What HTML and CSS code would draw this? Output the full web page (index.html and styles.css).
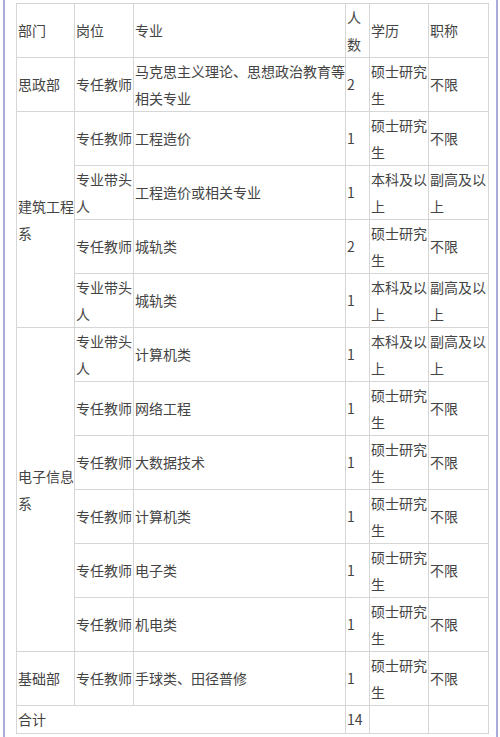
FILE: index.html
```html
<!DOCTYPE html>
<html lang="zh">
<head>
<meta charset="utf-8">
<link rel="stylesheet" href="styles.css">
</head>
<body>
<div class="frame">
<table class="jobs">
<colgroup>
<col class="c-dept"><col class="c-post"><col class="c-major"><col class="c-num"><col class="c-edu"><col class="c-title">
</colgroup>
<tbody>
<tr><td>部门</td><td>岗位</td><td>专业</td><td>人数</td><td>学历</td><td>职称</td></tr>
<tr><td>思政部</td><td>专任教师</td><td>马克思主义理论、思想政治教育等相关专业</td><td>2</td><td>硕士研究生</td><td>不限</td></tr>
<tr><td rowspan="4">建筑工程系</td><td>专任教师</td><td>工程造价</td><td>1</td><td>硕士研究生</td><td>不限</td></tr>
<tr><td>专业带头人</td><td>工程造价或相关专业</td><td>1</td><td>本科及以上</td><td>副高及以上</td></tr>
<tr><td>专任教师</td><td>城轨类</td><td>2</td><td>硕士研究生</td><td>不限</td></tr>
<tr><td>专业带头人</td><td>城轨类</td><td>1</td><td>本科及以上</td><td>副高及以上</td></tr>
<tr><td rowspan="6">电子信息系</td><td>专业带头人</td><td>计算机类</td><td>1</td><td>本科及以上</td><td>副高及以上</td></tr>
<tr><td>专任教师</td><td>网络工程</td><td>1</td><td>硕士研究生</td><td>不限</td></tr>
<tr><td>专任教师</td><td>大数据技术</td><td>1</td><td>硕士研究生</td><td>不限</td></tr>
<tr><td>专任教师</td><td>计算机类</td><td>1</td><td>硕士研究生</td><td>不限</td></tr>
<tr><td>专任教师</td><td>电子类</td><td>1</td><td>硕士研究生</td><td>不限</td></tr>
<tr><td>专任教师</td><td>机电类</td><td>1</td><td>硕士研究生</td><td>不限</td></tr>
<tr><td>基础部</td><td>专任教师</td><td>手球类、田径普修</td><td>1</td><td>硕士研究生</td><td>不限</td></tr>
<tr><td colspan="3">合计</td><td>14</td><td></td><td></td></tr>
</tbody>
</table>
</div>
</body>
</html>
```
FILE: styles.css
```css
html, body {
  margin: 0;
  padding: 0;
  background: #ffffff;
}
.frame {
  margin-left: 3px;
  width: 495px;
  height: 737px;
  border-left: 2px solid #a9acd9;
  border-right: 2px solid #a9acd9;
  padding: 3px 0 0 11px;
  box-sizing: border-box;
}
.jobs {
  border-collapse: collapse;
  table-layout: fixed;
  width: 472px;
  font-family: "Noto Sans CJK SC", "Microsoft YaHei", sans-serif;
  font-size: 14px;
  line-height: 26.5px;
  color: #444444;
}
.jobs td {
  border: 1px solid #d6d6d6;
  padding: 0 0 0 1px;
  vertical-align: middle;
  word-break: break-all;
}
.c-dept { width: 58px; }
.c-post { width: 59px; }
.c-major { width: 212px; }
.c-num { width: 24px; }
.c-edu { width: 59px; }
.c-title { width: 60px; }
```
